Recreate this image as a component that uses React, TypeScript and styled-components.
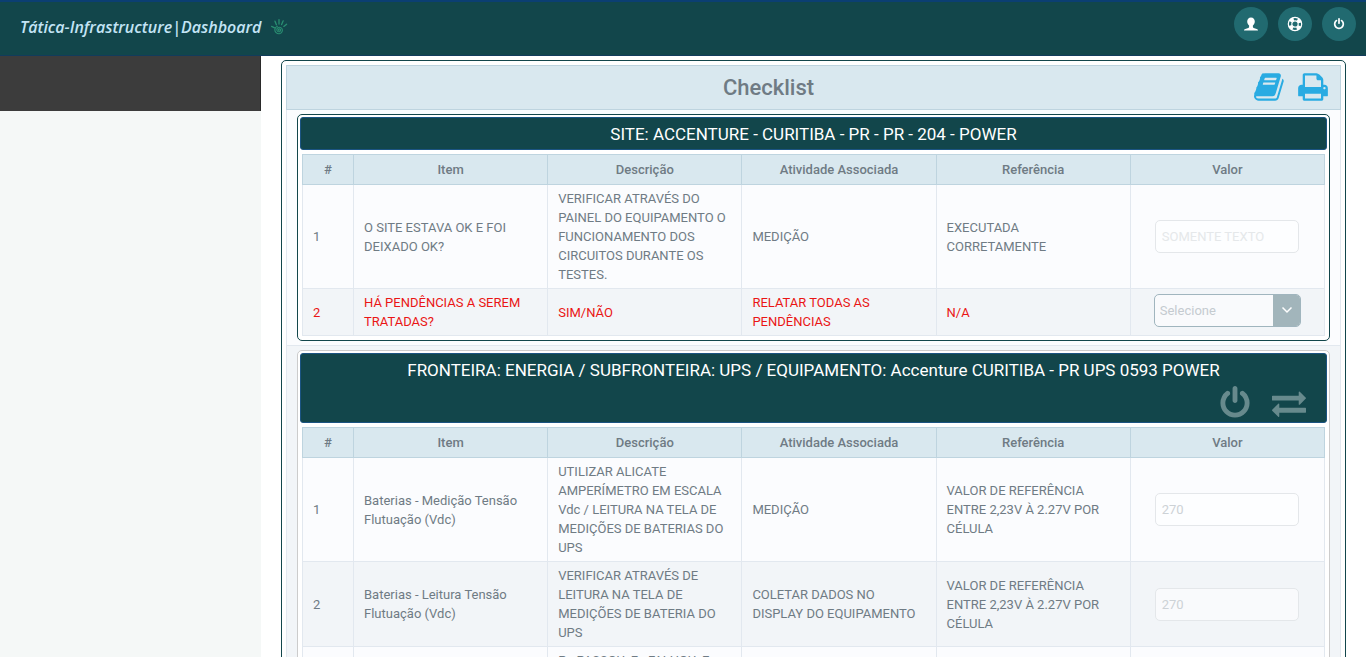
import React from "react";
import styled, { createGlobalStyle, css } from "styled-components";

const Global = createGlobalStyle`
  *, *::before, *::after { box-sizing: border-box; }
  body { margin: 0; background: #fff; color: #6f7b84; font: 13px/19px Roboto, sans-serif; }
  button, input, select { font: inherit; }
`;

const Shell = styled.div`
  height: 100vh;
  display: flex;
  flex-direction: column;
  overflow: hidden;
`;

const TopBar = styled.header`
  flex: none;
  display: flex;
  justify-content: space-between;
  height: 56px;
  padding: 0 10px 0 20px;
  background: #12464b;
  border-top: 2px solid #0b3f73;
  border-bottom: 1px solid #123c5c;
`;

const Brand = styled.a`
  display: flex;
  align-items: center;
  gap: 9px;
  padding-bottom: 4px;
  color: #c3e4f5;
  font: italic 600 16px/24px "Open Sans", sans-serif;
  text-decoration: none;
`;

const RoundButtons = styled.nav`
  display: flex;
  gap: 10px;
  padding-top: 5px;
`;

const RoundButton = styled.button`
  width: 34px;
  height: 34px;
  padding: 0;
  border: 0;
  border-radius: 50%;
  display: grid;
  place-items: center;
  color: #fff;
  background: #216a70;
`;

const Body = styled.div`
  flex: 1;
  min-height: 0;
  display: flex;
`;

const Sidebar = styled.aside`
  flex: none;
  width: 261px;
  background: #f5f8f7;
`;

const SidebarHead = styled.div`
  height: 55px;
  background: #3c3c3c;
  border-right: 1px solid #2a2a2a;
`;

const Main = styled.main`
  flex: 1;
  min-width: 0;
  padding: 4px 20px 0;
  overflow: hidden;
`;

const Frame = styled.div`
  padding: 4px;
  border: 1px solid #12464b;
  border-radius: 5px;
`;

const PageHead = styled.div`
  display: grid;
  grid-template-columns: 86px 1fr 86px;
  align-items: center;
  height: 45px;
  border: 1px solid #bed4df;
  background: #d9e8ef;
`;

const PageTitle = styled.h1`
  grid-column: 2;
  margin: 0;
  padding-right: 90px;
  text-align: center;
  font-size: 22px;
  line-height: 32px;
  font-weight: 500;
`;

const PageActions = styled.div`
  display: flex;
  gap: 11px;
  padding-bottom: 2px;
`;

const IconButton = styled.button`
  padding: 0;
  border: 0;
  background: none;
  color: inherit;
  display: flex;
`;

const PageIcon = styled(IconButton)`
  color: #29abe2;
`;

const Section = styled.div<{ $alt?: boolean }>`
  padding: 4px 10px;
  border: 1px solid #e2e8ef;
  border-top: 0;
  background: ${(p) => (p.$alt ? "#f2f5f8" : "#fbfcfe")};
`;

const Panel = styled.section<{ $muted?: boolean }>`
  padding: 2px;
  background: #fff;
  border: 1px solid ${(p) => (p.$muted ? "#cccccc" : "#12464b")};
  border-radius: 5px;
`;

const PanelHead = styled.div`
  padding: 4px 20px 2px;
  border: 1px solid #1b5482;
  border-radius: 3px;
  background: #12464b;
  color: #fff;
`;

const PanelTitle = styled.h2`
  margin: 0;
  text-align: center;
  font-size: 17px;
  line-height: 25px;
  font-weight: 400;
`;

const PanelTools = styled.div`
  display: flex;
  justify-content: flex-end;
  gap: 20px;
  height: 37px;
  padding-top: 3px;
  color: #678a8d;
`;

const Sheet = styled.table`
  width: calc(100% - 4px);
  margin: 4px 2px 2px;
  table-layout: fixed;
  border-collapse: collapse;
`;

const NumberCol = styled.col`
  width: 51px;
`;

const Th = styled.th`
  height: 30px;
  padding: 0;
  border: 1px solid #bed4df;
  background: #d9e8ef;
  font-weight: 500;
`;

const Row = styled.tr<{ $alert?: boolean }>`
  background: #fbfcfe;
  &:nth-child(even) { background: #f2f5f8; }
  ${(p) => p.$alert && css`color: #ea1515;`}
`;

const Td = styled.td`
  padding: 4px 10px;
  border: 1px solid #e2e8ef;
  white-space: pre-line;
`;

const ValueTd = styled(Td)`
  padding: 4px 23px;
`;

const TextBox = styled.input`
  display: block;
  width: calc(100% - 3px);
  height: 33px;
  margin-left: 1px;
  padding: 0 6px;
  border: 1px solid #e4e7ea;
  border-radius: 5px;
  background: rgba(255, 255, 255, 0.5);
  color: #cdd2d6;
  &::placeholder { color: #e5e8ea; opacity: 1; }
`;

const SelectBox = styled.div`
  display: flex;
  height: 33px;
  margin-top: -4px;
  border: 1px solid #a0b5be;
  border-radius: 5px;
  background: #f9fafc;
  overflow: hidden;
`;

const Select = styled.select`
  flex: 1;
  min-width: 0;
  padding: 0 5px;
  border: 0;
  appearance: none;
  background: none;
  color: #c5cbd0;
  opacity: 1;
`;

const SelectArrow = styled.span`
  width: 27px;
  display: grid;
  place-items: center;
  background: #a2b5bb;
  color: #fff;
`;

const paths = {
  book: "M1639 478q40 57 18 129l-275 906q-19 64-76.5 107.5t-122.5 43.5h-923q-77 0-148.5-53.5t-99.5-131.5q-24-67-2-127 0-4 3-27t4-37q1-8-3-21.5t-3-19.5q2-11 8-21t16.5-23.5 16.5-23.5q23-38 45-91.5t30-91.5q3-10 .5-30t-.5-28q3-11 17-28t17-23q21-36 42-92t25-90q1-9-2.5-32t.5-28q4-13 22-30.5t22-22.5q19-26 42.5-84.5t27.5-96.5q1-8-3-25.5t-2-26.5q2-8 9-18t18-23 17-21q8-12 16.5-30.5t15-35 16-36 19.5-32 26.5-23.5 36-11.5 47.5 5.5l-1 3q38-9 51-9h761q74 0 114 56t18 130l-274 906q-36 119-71.5 153.5t-128.5 34.5h-869q-27 0-38 15-11 16-1 43 24 70 144 70h923q29 0 56-15.5t35-41.5l300-987q7-22 5-57 38 15 59 43zm-1064 2q-4 13 2 22.5t20 9.5h608q13 0 25.5-9.5t16.5-22.5l21-64q4-13-2-22.5t-20-9.5h-608q-13 0-25.5 9.5t-16.5 22.5zm-83 256q-4 13 2 22.5t20 9.5h608q13 0 25.5-9.5t16.5-22.5l21-64q4-13-2-22.5t-20-9.5h-608q-13 0-25.5 9.5t-16.5 22.5z",
  print: "M448 1536h896v-256h-896v256zm0-640h896v-384h-160q-40 0-68-28t-28-68v-160h-640v640zm1152 64q0-26-19-45t-45-19-45 19-19 45 19 45 45 19 45-19 19-45zm128 0v416q0 13-9.5 22.5t-22.5 9.5h-224v160q0 40-28 68t-68 28h-960q-40 0-68-28t-28-68v-160h-224q-13 0-22.5-9.5t-9.5-22.5v-416q0-79 56.5-135.5t135.5-56.5h64v-544q0-40 28-68t68-28h672q40 0 88 20t76 48l152 152q28 28 48 76t20 88v256h64q79 0 135.5 56.5t56.5 135.5z",
  power: "M1664 896q0 156-61 298t-164 245-245 164-298 61-298-61-245-164-164-245-61-298q0-182 80.5-343t226.5-270q43-32 95.5-25t83.5 50q32 42 24.5 94.5t-49.5 84.5q-98 74-151.5 181t-53.5 228q0 104 40.5 198.5t109.5 163.5 163.5 109.5 198.5 40.5 198.5-40.5 163.5-109.5 109.5-163.5 40.5-198.5q0-121-53.5-228t-151.5-181q-42-32-49.5-84.5t24.5-94.5q31-43 84-50t95 25q146 109 226.5 270t80.5 343zm-640-768v640q0 52-38 90t-90 38-90-38-38-90v-640q0-52 38-90t90-38 90 38 38 90z",
  exchange: "M1792 1184v192q0 13-9.5 22.5t-22.5 9.5h-1376v192q0 13-9.5 22.5t-22.5 9.5q-12 0-24-10l-319-320q-9-9-9-22 0-14 9-23l320-320q9-9 23-9 13 0 22.5 9.5t9.5 22.5v192h1376q13 0 22.5 9.5t9.5 22.5zm0-544q0 14-9 23l-320 320q-9 9-23 9-13 0-22.5-9.5t-9.5-22.5v-192h-1376q-13 0-22.5-9.5t-9.5-22.5v-192q0-13 9.5-22.5t22.5-9.5h1376v-192q0-14 9-23t23-9q12 0 24 10l319 319q9 9 9 23z",
};

const Glyph = ({ name, size }: { name: keyof typeof paths; size: number }) => (
  <svg width={size} height={size} viewBox="0 0 1792 1792" fill="currentColor" aria-hidden="true">
    <path d={paths[name]} />
  </svg>
);

const HandLogo = () => (
  <svg width="18" height="18" viewBox="0 0 18 18" fill="none" stroke="#2a8f72" strokeLinecap="round" aria-hidden="true">
    <path strokeWidth="1.3" d="M6.400 6.800 5 3.200M9 6V1.600M11.600 6.600l1.600-3.800M13.800 8.400l2.800-2.200M4.600 9.800 1.600 8.400" />
    <path strokeWidth="1.1" d="M9 12.400c-.9-.2-.7-1.600.4-1.600 1.500.1 1.700 2.300.1 2.900-1.800.5-3.200-1.300-2.500-3 .9-1.900 3.700-2 4.900-.2 1.300 2.200-.1 5-2.600 5.300-2.500.2-4.600-1.700-4.500-4.200.1-1.600 1.200-2.800 2.600-3.300" />
  </svg>
);

const UserIcon = () => (
  <svg width="16" height="16" viewBox="0 0 16 16" fill="#fff" aria-hidden="true">
    <path d="M8 1.4c2.400 0 3.800 1.700 3.800 4.100 0 1.700-.8 3.200-1.900 4.100v1.300c0 .5.3.8.8 1l3 1.100c.8.3 1.300.8 1.300 1.500H1c0-.7.5-1.200 1.300-1.500l3-1.100c.5-.2.8-.5.8-1V9.600C5 8.700 4.200 7.200 4.200 5.500 4.200 3.100 5.600 1.400 8 1.400Z" />
  </svg>
);

const RingIcon = () => (
  <svg width="16" height="16" viewBox="0 0 16 16" fill="none" stroke="#fff" aria-hidden="true">
    <circle cx="8" cy="8" r="6.700" strokeWidth="1.200" />
    <circle cx="8" cy="8" r="3.200" strokeWidth="1.200" />
    <circle cx="8" cy="8" r="5" strokeWidth="3.400" strokeDasharray="3.927 3.927" strokeDashoffset="-1.960" />
  </svg>
);

const Chevron = () => (
  <svg width="12" height="8" viewBox="0 0 12 8" fill="none" stroke="currentColor" strokeWidth="1.500" aria-hidden="true">
    <path d="m1.500 1.500 4.500 4.500 4.500-4.500" />
  </svg>
);

type Entry = {
  item: string;
  description: string;
  activity: string;
  reference: string;
  value?: string;
  kind?: "select";
  alert?: boolean;
};

const headings = ["#", "Item", "Descrição", "Atividade Associada", "Referência", "Valor"];

const siteEntries: Entry[] = [
  {
    item: "O SITE ESTAVA OK E FOI\nDEIXADO OK?",
    description: "VERIFICAR ATRAVÉS DO\nPAINEL DO EQUIPAMENTO O\nFUNCIONAMENTO DOS\nCIRCUITOS DURANTE OS\nTESTES.",
    activity: "MEDIÇÃO",
    reference: "EXECUTADA\nCORRETAMENTE",
  },
  {
    item: "HÁ PENDÊNCIAS A SEREM\nTRATADAS?",
    description: "SIM/NÃO",
    activity: "RELATAR TODAS AS\nPENDÊNCIAS",
    reference: "N/A",
    kind: "select",
    alert: true,
  },
];

const upsEntries: Entry[] = [
  {
    item: "Baterias - Medição Tensão\nFlutuação (Vdc)",
    description: "UTILIZAR ALICATE\nAMPERÍMETRO EM ESCALA\nVdc / LEITURA NA TELA DE\nMEDIÇÕES DE BATERIAS DO\nUPS",
    activity: "MEDIÇÃO",
    reference: "VALOR DE REFERÊNCIA\nENTRE 2,23V À 2.27V POR\nCÉLULA",
    value: "270",
  },
  {
    item: "Baterias - Leitura Tensão\nFlutuação (Vdc)",
    description: "VERIFICAR ATRAVÉS DE\nLEITURA NA TELA DE\nMEDIÇÕES DE BATERIA DO\nUPS",
    activity: "COLETAR DADOS NO\nDISPLAY DO EQUIPAMENTO",
    reference: "VALOR DE REFERÊNCIA\nENTRE 2,23V À 2.27V POR\nCÉLULA",
    value: "270",
  },
  {
    item: "Baterias - Teste",
    description: "P - PASSOU, F - FALHOU, E\nE - EXECUTADO,\nN - NÃO EXECUTADO\nNO UPS",
    activity: "MEDIÇÃO",
    reference: "N/A",
    value: "",
  },
];

const ChecklistTable = ({ entries }: { entries: Entry[] }) => (
  <Sheet>
    <colgroup>
      <NumberCol />
      <col span={5} />
    </colgroup>
    <thead>
      <tr>
        {headings.map((h) => (
          <Th key={h} scope="col">{h}</Th>
        ))}
      </tr>
    </thead>
    <tbody>
      {entries.map((e, i) => (
        <Row key={i} $alert={e.alert}>
          <Td>{i + 1}</Td>
          <Td>{e.item}</Td>
          <Td>{e.description}</Td>
          <Td>{e.activity}</Td>
          <Td>{e.reference}</Td>
          <ValueTd>
            {e.kind === "select" ? (
              <SelectBox>
                <Select disabled aria-label={e.item}>
                  <option>Selecione</option>
                </Select>
                <SelectArrow><Chevron /></SelectArrow>
              </SelectBox>
            ) : (
              <TextBox disabled aria-label={e.item} defaultValue={e.value} placeholder="SOMENTE TEXTO" />
            )}
          </ValueTd>
        </Row>
      ))}
    </tbody>
  </Sheet>
);

export default function App() {
  return (
    <Shell>
      <Global />
      <TopBar>
        <Brand href="#">
          Tática-Infrastructure|Dashboard
          <HandLogo />
        </Brand>
        <RoundButtons>
          <RoundButton aria-label="Usuário"><UserIcon /></RoundButton>
          <RoundButton aria-label="Ajuda"><RingIcon /></RoundButton>
          <RoundButton aria-label="Sair"><Glyph name="power" size={12} /></RoundButton>
        </RoundButtons>
      </TopBar>
      <Body>
        <Sidebar>
          <SidebarHead />
        </Sidebar>
        <Main>
          <Frame>
            <PageHead>
              <PageTitle>Checklist</PageTitle>
              <PageActions>
                <PageIcon aria-label="Histórico"><Glyph name="book" size={32} /></PageIcon>
                <PageIcon aria-label="Imprimir"><Glyph name="print" size={32} /></PageIcon>
              </PageActions>
            </PageHead>
            <Section>
              <Panel>
                <PanelHead>
                  <PanelTitle>SITE: ACCENTURE - CURITIBA - PR - PR - 204 - POWER</PanelTitle>
                </PanelHead>
                <ChecklistTable entries={siteEntries} />
              </Panel>
            </Section>
            <Section $alt>
              <Panel $muted>
                <PanelHead>
                  <PanelTitle>FRONTEIRA: ENERGIA / SUBFRONTEIRA: UPS / EQUIPAMENTO: Accenture CURITIBA - PR UPS 0593 POWER</PanelTitle>
                  <PanelTools>
                    <IconButton aria-label="Desligar"><Glyph name="power" size={34} /></IconButton>
                    <IconButton aria-label="Trocar"><Glyph name="exchange" size={34} /></IconButton>
                  </PanelTools>
                </PanelHead>
                <ChecklistTable entries={upsEntries} />
              </Panel>
            </Section>
          </Frame>
        </Main>
      </Body>
    </Shell>
  );
}
